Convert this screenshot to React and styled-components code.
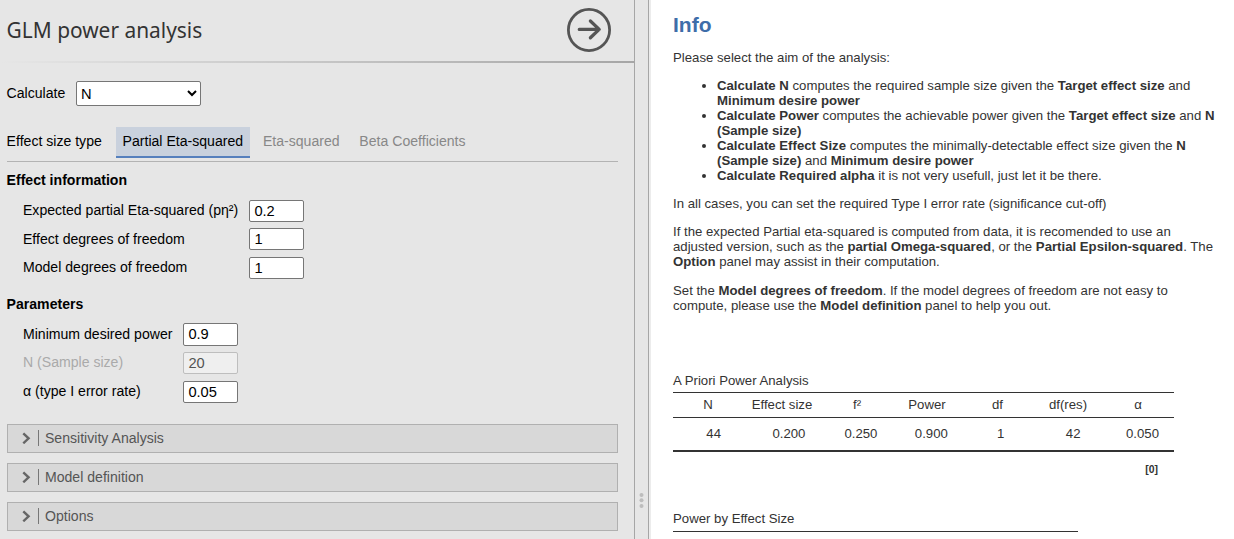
import React from "react";
import styled, { createGlobalStyle } from "styled-components";

const Global = createGlobalStyle`
  * { box-sizing: border-box; }
  html, body { margin: 0; padding: 0; overflow: hidden; }
  body { font-family: "Liberation Sans", Arial, sans-serif; background: #fff; }
`;

const Page = styled.div`
  display: flex;
  width: 1234px;
  height: 539px;
  overflow: hidden;
`;

const OptionsPanel = styled.section`
  width: 634px;
  height: 539px;
  background: #e6e6e6;
  color: #000;
  font-size: 14.08px;
  line-height: 16px;
`;

const Header = styled.header`
  display: flex;
  justify-content: space-between;
  height: 61px;
  padding: 8px 23px 0 6.6px;
`;

const Title = styled.h1`
  margin: 0;
  font: 400 20.9px/44px "Noto Sans", sans-serif;
  color: #333;
`;

const RoundButton = styled.button`
  width: 44px;
  height: 44px;
  padding: 0;
  border: 0;
  background: none;
  svg { display: block; }
`;

const HeaderRule = styled.div`
  height: 2px;
  background: linear-gradient(to right, #e6e6e6, #a6a6a6);
`;

const Body = styled.div`
  padding: 18px 16px 0 6.6px;
`;

const Row = styled.div`
  display: flex;
  align-items: flex-start;
`;

const SelectLabel = styled.span`
  width: 69.4px;
  padding-top: 4px;
`;

const Select = styled.select`
  width: 125px;
  height: 25px;
  padding: 0;
  font: 14.67px "Liberation Sans", Arial, sans-serif;
  color: #000;
  background: #fff;
  border: 1px solid #767676;
  border-radius: 2px;
`;

const TabRow = styled(Row)`
  height: 35px;
  margin-top: 21px;
  border-bottom: 1px solid #b3b3b3;
`;

const TabLabel = styled.span`
  width: 109.4px;
  padding-top: 6px;
`;

const Tab = styled.span`
  height: 31px;
  padding: 6px 6.6px 0;
  margin-right: 6.6px;
  color: ${(p) => (p.$active ? "#000" : "#888")};
  background: ${(p) => (p.$active ? "#c9d1dd" : "transparent")};
  border-bottom: 2px solid ${(p) => (p.$active ? "#5680bd" : "transparent")};
`;

const GroupTitle = styled.h2`
  margin: ${(p) => p.$top}px 0 ${(p) => p.$bottom}px;
  font-size: 14.08px;
  line-height: 16px;
  font-weight: 700;
`;

const Field = styled.label`
  display: flex;
  height: ${(p) => p.$h}px;
  padding-left: 16.4px;
  color: ${(p) => (p.$disabled ? "#aaa" : "#000")};
`;

const FieldName = styled.span`
  width: ${(p) => p.$w}px;
  padding-top: ${(p) => p.$shift || 2}px;
`;

const Input = styled.input`
  width: 55px;
  height: ${(p) => p.$h || 22}px;
  padding: 1px 4.4px ${(p) => (p.$h ? 2 : 1)}px;
  font: 14.67px "Liberation Sans", Arial, sans-serif;
  color: #000;
  background: #fff;
  border: 1px solid #767676;
  border-radius: 2px;
  &:disabled {
    color: #545454;
    background: #efefef;
    border-color: #bebebe;
  }
`;

const Collapsers = styled.div`
  display: grid;
  gap: 10px;
  margin-top: 16px;
`;

const Collapser = styled.div`
  display: flex;
  align-items: center;
  height: 29px;
  padding: 0 0 1px 14px;
  color: #555;
  background: #d8d8d8;
  border: 1px solid #b0b0b0;
`;

const Divider = styled.span`
  width: 1px;
  height: 16px;
  margin: 0 6px 0 7.4px;
  background: #777;
`;

const Splitter = styled.div`
  display: flex;
  justify-content: center;
  width: 15px;
  padding-top: 492px;
  background: #e6e6e6;
  border-left: 1px solid #a6a6a6;
  border-right: 1px solid #a6a6a6;
`;

const Results = styled.main`
  flex: 1;
  padding: 12px 14px 0 22px;
  border-left: 2px solid #ececec;
  color: #333;
  font-size: 13.2px;
  line-height: 15px;
`;

const InfoTitle = styled.h2`
  margin: 0 0 13px;
  font-size: 21px;
  line-height: 25px;
  color: #3e6da9;
`;

const Para = styled.p`
  margin: 0 0 ${(p) => p.$gap || 13}px;
`;

const List = styled.ul`
  margin: 0 0 13px;
  padding-left: 44px;
`;

const Caption = styled.div`
  height: 19px;
`;

const Table = styled.div`
  width: 501px;
  border-top: 1px solid #333;
  border-bottom: 2px solid #333;
`;

const TableRow = styled.div`
  display: grid;
  grid-template-columns: 70px 78px 72px 68px 73px 68px 72px;
`;

const HeadRow = styled(TableRow)`
  height: 25px;
  padding-top: 4px;
  text-align: center;
  border-bottom: 1px solid #333;
`;

const ValueRow = styled(TableRow)`
  height: 32px;
  padding-top: 8px;
  text-align: right;
`;

const Value = styled.span`
  padding-right: ${(p) => p.$r}px;
`;

const Note = styled.div`
  width: 501px;
  padding: 10px 16px 0 0;
  text-align: right;
  font-size: 10.4px;
  font-weight: 700;
`;

const NextCaption = styled.div`
  width: 405px;
  height: 21px;
  margin-top: 34px;
  border-bottom: 1px solid #333;
`;

const ArrowIcon = () => (
  <svg width="44" height="44" viewBox="0 0 44 44" fill="none" stroke="#555">
    <circle cx="22" cy="22" r="20.6" strokeWidth="2.8" />
    <path d="M12.3 21.4H32M23.4 13L32.2 21.4L23.4 29.8" strokeWidth="3.3" strokeLinecap="round" strokeLinejoin="round" />
  </svg>
);

const Chevron = () => (
  <svg width="9" height="12" viewBox="0 0 9 12" fill="none" stroke="#666" strokeWidth="2.4">
    <path d="M1.3 1.3L6.6 6.3L1.3 11.3" />
  </svg>
);

const columns = [
  ["N", "44", 22],
  ["Effect size", "0.200", 15.6],
  ["f²", "0.250", 15.6],
  ["Power", "0.900", 13.2],
  ["df", "1", 29.6],
  ["df(res)", "42", 21.5],
  ["α", "0.050", 15],
];

export default function App() {
  return (
    <Page>
      <Global />
      <OptionsPanel>
        <Header>
          <Title>GLM power analysis</Title>
          <RoundButton aria-label="Hide options"><ArrowIcon /></RoundButton>
        </Header>
        <HeaderRule />
        <Body>
          <Row>
            <SelectLabel>Calculate</SelectLabel>
            <Select defaultValue="N"><option>N</option></Select>
          </Row>
          <TabRow>
            <TabLabel>Effect size type</TabLabel>
            <Tab $active>Partial Eta-squared</Tab>
            <Tab>Eta-squared</Tab>
            <Tab>Beta Coefficients</Tab>
          </TabRow>
          <GroupTitle $top={10} $bottom={12}>Effect information</GroupTitle>
          <Field $h={28}><FieldName $w={226}>Expected partial Eta-squared (pη²)</FieldName><Input defaultValue="0.2" /></Field>
          <Field $h={29}><FieldName $w={226} $shift={3}>Effect degrees of freedom</FieldName><Input defaultValue="1" /></Field>
          <Field $h={22}><FieldName $w={226}>Model degrees of freedom</FieldName><Input defaultValue="1" /></Field>
          <GroupTitle $top={17} $bottom={11}>Parameters</GroupTitle>
          <Field $h={29}><FieldName $w={160} $shift={3}>Minimum desired power</FieldName><Input $h={23} defaultValue="0.9" /></Field>
          <Field $h={29} $disabled><FieldName $w={160}>N (Sample size)</FieldName><Input disabled defaultValue="20" /></Field>
          <Field $h={27}><FieldName $w={160}>α (type I error rate)</FieldName><Input defaultValue="0.05" /></Field>
          <Collapsers>
            {["Sensitivity Analysis", "Model definition", "Options"].map((name) => (
              <Collapser key={name}><Chevron /><Divider />{name}</Collapser>
            ))}
          </Collapsers>
        </Body>
      </OptionsPanel>
      <Splitter>
        <svg width="5" height="17" viewBox="0 0 5 17" fill="#bdbdbd">
          <circle cx="2.5" cy="3" r="2" />
          <circle cx="2.5" cy="8.3" r="2" />
          <circle cx="2.5" cy="14" r="2" />
        </svg>
      </Splitter>
      <Results>
        <InfoTitle>Info</InfoTitle>
        <Para>Please select the aim of the analysis:</Para>
        <List>
          <li><b>Calculate N</b> computes the required sample size given the <b>Target effect size</b> and <b>Minimum desire power</b></li>
          <li><b>Calculate Power</b> computes the achievable power given the <b>Target effect size</b> and <b>N (Sample size)</b></li>
          <li><b>Calculate Effect Size</b> computes the minimally-detectable effect size given the <b>N (Sample size)</b> and <b>Minimum desire power</b></li>
          <li><b>Calculate Required alpha</b> it is not very usefull, just let it be there.</li>
        </List>
        <Para>In all cases, you can set the required Type I error rate (significance cut-off)</Para>
        <Para $gap={14}>If the expected Partial eta-squared is computed from data, it is recomended to use an adjusted version, such as the <b>partial Omega-squared</b>, or the <b>Partial Epsilon-squared</b>. The <b>Option</b> panel may assist in their computation.</Para>
        <Para $gap={60}>Set the <b>Model degrees of freedom</b>. If the model degrees of freedom are not easy to compute, please use the <b>Model definition</b> panel to help you out.</Para>
        <Caption>A Priori Power Analysis</Caption>
        <Table>
          <HeadRow>{columns.map(([name]) => <span key={name}>{name}</span>)}</HeadRow>
          <ValueRow>{columns.map(([name, value, r]) => <Value key={name} $r={r}>{value}</Value>)}</ValueRow>
        </Table>
        <Note>[0]</Note>
        <NextCaption>Power by Effect Size</NextCaption>
      </Results>
    </Page>
  );
}
